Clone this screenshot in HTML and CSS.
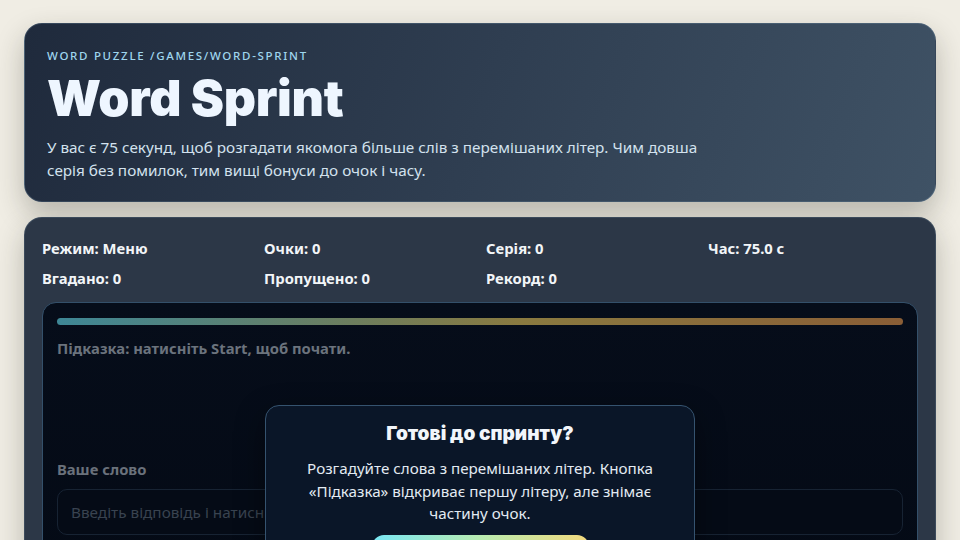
FILE: index.html
```html
<!DOCTYPE html>
<html lang="uk">
<head>
<meta charset="utf-8">
<title>Word Sprint</title>
<link rel="stylesheet" href="styles.css">
</head>
<body>
  <header class="hero">
    <div class="crumb">WORD PUZZLE /GAMES/WORD-SPRINT</div>
    <h1 class="title">Word Sprint</h1>
    <p class="lead">У вас є 75 секунд, щоб розгадати якомога більше слів з перемішаних літер. Чим довша серія без помилок, тим вищі бонуси до очок і часу.</p>
  </header>

  <main class="panel">
    <div class="stats">
      <div class="stat">Режим: Меню</div>
      <div class="stat">Очки: 0</div>
      <div class="stat">Серія: 0</div>
      <div class="stat">Час: 75.0 с</div>
      <div class="stat">Вгадано: 0</div>
      <div class="stat">Пропущено: 0</div>
      <div class="stat">Рекорд: 0</div>
    </div>

    <section class="arena">
      <div class="timebar"></div>
      <div class="hint">Підказка: натисніть Start, щоб почати.</div>
      <div class="tiles"></div>
      <label class="field-label" for="answer">Ваше слово</label>
      <input class="field" id="answer" type="text" placeholder="Введіть відповідь і натисніть Enter">

      <div class="overlay">
        <div class="modal">
          <h2 class="modal-title">Готові до спринту?</h2>
          <p class="modal-text">Розгадуйте слова з перемішаних літер. Кнопка «Підказка» відкриває першу літеру, але знімає частину очок.</p>
          <button class="start" type="button">Start</button>
        </div>
      </div>
    </section>
  </main>
</body>
</html>
```

FILE: styles.css
```css
* { box-sizing: border-box; }

html, body {
  margin: 0;
  height: 100%;
  overflow: hidden;
}

body {
  background: #f0ede4;
  padding: 23px 24px 0;
  font-family: "Noto Sans", "Open Sans", sans-serif;
  color: #eef3f8;
}

.hero {
  border-radius: 18px;
  background: linear-gradient(110deg, #1f2a3c 0%, #2f3e51 50%, #3f5265 100%);
  border: 1px solid rgba(120, 150, 175, 0.25);
  box-shadow: 0 12px 28px rgba(40, 40, 30, 0.28);
  padding: 25px 22px 19px;
}

.crumb {
  font-size: 11.5px;
  line-height: 14px;
  letter-spacing: 1.7px;
  color: #9fd6ee;
  font-weight: 500;
}

.title {
  margin: 8px 0 0;
  font-family: Inter, "DejaVu Sans", sans-serif;
  font-weight: 900;
  font-size: 50px;
  line-height: 54px;
  letter-spacing: -0.3px;
  color: #eef6ff;
}

.lead {
  margin: 11px 0 0;
  max-width: 680px;
  font-size: 15.3px;
  line-height: 23px;
  color: #d3e2ee;
}

.panel {
  margin-top: 15px;
  border-radius: 18px;
  background: #2c3747;
  border: 1px solid rgba(120, 150, 175, 0.2);
  box-shadow: 0 12px 28px rgba(40, 40, 30, 0.28);
  padding: 21px 17px 40px;
  height: 400px;
}

.stats {
  display: grid;
  grid-template-columns: repeat(4, 1fr);
  column-gap: 12px;
  row-gap: 12px;
  font-weight: 700;
  font-size: 14.8px;
  line-height: 18px;
  color: #f2f5f8;
}

.arena {
  position: relative;
  margin-top: 15px;
  border: 1px solid #34506a;
  border-radius: 14px;
  background: linear-gradient(180deg, #060d1a 0%, #040a15 100%);
  padding: 15px 14px 30px;
  display: flex;
  flex-direction: column;
  height: 300px;
}

.timebar {
  height: 7px;
  border-radius: 4px;
  background: linear-gradient(90deg, #3e8796 0%, #6d7e5e 35%, #8a7a40 55%, #8a5e36 100%);
}

.hint {
  margin-top: 14px;
  font-weight: 700;
  font-size: 14.8px;
  line-height: 18px;
  color: #6b737d;
}

.tiles {
  height: 103px;
}

.field-label {
  font-weight: 700;
  font-size: 14.8px;
  line-height: 18px;
  color: #6a717b;
}

.field {
  margin-top: 11px;
  height: 46px;
  border-radius: 10px;
  border: 1px solid #172333;
  background: #050b16;
  padding: 0 13px;
  font: inherit;
  font-size: 15.3px;
  color: #cdd6e0;
}

.field::placeholder {
  color: #394350;
}

.overlay {
  position: absolute;
  inset: 0;
  display: flex;
  justify-content: center;
  align-items: flex-start;
  padding-top: 102px;
}

.modal {
  width: 430px;
  border-radius: 14px;
  border: 1px solid #35536f;
  background: #0a1628;
  padding: 16px 22px 20px;
  text-align: center;
  box-shadow: 0 10px 30px rgba(0, 0, 0, 0.4);
}

.modal-title {
  margin: 0;
  font-family: Inter, "DejaVu Sans", sans-serif;
  font-weight: 900;
  font-size: 19px;
  line-height: 24px;
  color: #f2f6fb;
}

.modal-text {
  margin: 11px 0 0;
  font-size: 15.2px;
  line-height: 22.5px;
  color: #e3ebf3;
}

.start {
  margin-top: 10px;
  width: 217px;
  height: 40px;
  border: 0;
  border-radius: 12px;
  background: linear-gradient(90deg, #78e6f4 0%, #b8ebb0 50%, #f2d97e 100%);
  font: inherit;
  font-weight: 700;
  font-size: 15px;
  color: #0b1526;
}
```
